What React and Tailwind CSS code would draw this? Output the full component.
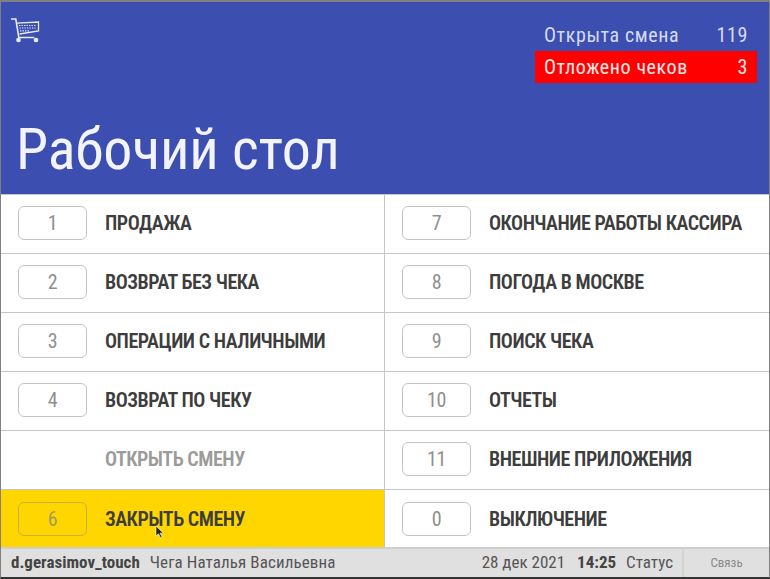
const left = [
  { key: '1', label: 'ПРОДАЖА' },
  { key: '2', label: 'ВОЗВРАТ БЕЗ ЧЕКА' },
  { key: '3', label: 'ОПЕРАЦИИ С НАЛИЧНЫМИ' },
  { key: '4', label: 'ВОЗВРАТ ПО ЧЕКУ' },
  { key: '', label: 'ОТКРЫТЬ СМЕНУ', disabled: true },
  { key: '6', label: 'ЗАКРЫТЬ СМЕНУ', active: true },
]

const right = [
  { key: '7', label: 'ОКОНЧАНИЕ РАБОТЫ КАССИРА' },
  { key: '8', label: 'ПОГОДА В МОСКВЕ' },
  { key: '9', label: 'ПОИСК ЧЕКА' },
  { key: '10', label: 'ОТЧЕТЫ' },
  { key: '11', label: 'ВНЕШНИЕ ПРИЛОЖЕНИЯ' },
  { key: '0', label: 'ВЫКЛЮЧЕНИЕ' },
]

function CartIcon() {
  return (
    <svg width="30" height="26" viewBox="0 0 30 26" fill="none" stroke="#e6e9f6" strokeWidth="1.3" className="ml-[10px] mt-[15px]">
      <path d="M0 2h4.8l3 18.5h15.5" strokeWidth="1.6" />
      <path d="M5.5 6.2L27.5 5v9L8.5 17" />
      <path d="M8 8.5h17M8.5 11h16M9 13.8h10" strokeDasharray="1.4 1.1" strokeWidth="1.2" />
      <circle cx="7.5" cy="23" r="1.7" fill="#e6e9f6" />
      <circle cx="25" cy="23" r="1.7" fill="#e6e9f6" />
    </svg>
  )
}

function Row({ item, last }) {
  const bg = item.active ? 'bg-[#ffd600]' : 'bg-white'
  return (
    <div className={`flex h-[59px] items-center pl-[17px] ${bg} ${last ? '' : 'border-b border-[#c6c6c6]'}`}>
      {item.key ? (
        <div className={`-mt-[2px] flex h-[34px] w-[69px] items-center justify-center rounded-[6px] border text-[20px] font-normal tracking-[-0.3px] [font-stretch:75%] ${item.active ? 'border-[#c9b23a] text-[#a39a5c]' : 'border-[#c4c4c4] text-[#8f8f8f]'}`}>
          {item.key}
        </div>
      ) : (
        <div className="w-[69px]" />
      )}
      <span className={`-mt-[2px] ml-[18px] text-[20px] font-semibold tracking-[-0.47px] [font-stretch:75%] ${item.disabled ? 'text-[#9b9b9b]' : 'text-[#3d3d3d]'}`}>
        {item.label}
      </span>
    </div>
  )
}

export default function App() {
  return (
    <div className="relative flex h-[579px] w-[770px] flex-col overflow-hidden border-t-2 border-b-2 border-l border-r border-t-[#808080] border-b-[#333333] border-l-[#808080] border-r-[#808080] bg-white font-['Roboto',sans-serif]">
      <header className="flex h-[192px] shrink-0 flex-col justify-between bg-[#3c4fb1]">
        <div className="flex items-start justify-between">
          <CartIcon />
          <div className="mr-[12px] mt-[17px] w-[222px] text-[20px] leading-[32px] tracking-[0.6px] [font-stretch:85%]">
            <div className="flex h-[32px] justify-between px-[9px] text-[#d5daf0]">
              <span>Открыта смена</span>
              <span>119</span>
            </div>
            <div className="flex h-[32px] justify-between bg-[#ff0000] px-[9px] text-[#ffe9e9]">
              <span>Отложено чеков</span>
              <span>3</span>
            </div>
          </div>
        </div>
        <h1 className="mb-[14px] ml-[15px] text-[58px] font-normal leading-[62px] tracking-[-0.15px] text-[#f3f4fb] [font-stretch:85%]">Рабочий стол</h1>
      </header>
      <main className="grid flex-1 grid-cols-[384px_1fr] border-t border-[#c6c6c6]">
        <div className="border-r border-[#c6c6c6]">
          {left.map((item, i) => (
            <Row key={item.label} item={item} last={i === 5} />
          ))}
        </div>
        <div>
          {right.map((item, i) => (
            <Row key={item.label} item={item} last={i === 5} />
          ))}
        </div>
      </main>
      <footer className="-mt-[2px] flex h-[32px] shrink-0 items-center border-t-2 border-[#cfcfcf] bg-[#e0e0e0] pb-[2px] pl-[10px] text-[17px] text-[#555555] [font-stretch:85%]">
        <span className="font-bold text-[#444444]">d.gerasimov_touch</span>
        <span className="ml-[10px] tracking-[0.1px]">Чега Наталья Васильевна</span>
        <span className="ml-auto">28 дек 2021</span>
        <span className="ml-[12px] font-bold text-[#444444]">14:25</span>
        <span className="ml-[10px] mr-[9px]">Статус</span>
        <div className="-mb-[2px] flex w-[87px] items-center justify-center self-stretch border-l-2 border-[#d4d4d4] pb-[2px] text-[13px] text-[#8a8a8a]">Связь</div>
      </footer>
      <svg width="10" height="14" viewBox="0 0 10 14" className="absolute left-[154px] top-[523px]">
        <path d="M1 1v10l2.5-2.2 2 4 1.6-.8-2-3.8h3.2z" fill="#222222" stroke="#ffffff" strokeWidth="0.6" />
      </svg>
    </div>
  )
}
